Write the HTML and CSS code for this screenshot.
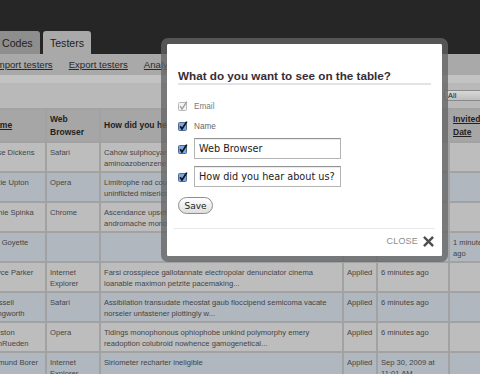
FILE: index.html
```html
<!DOCTYPE html>
<html>
<head>
<meta charset="utf-8">
<link rel="stylesheet" href="styles.css">
</head>
<body>
<div class="page">
  <div class="topbar">
    <div class="tab tab-codes">Codes</div>
    <div class="tab tab-testers">Testers</div>
  </div>
  <div class="subnav">
    <a class="subnav-link first">Import testers</a>
    <a class="subnav-link">Export testers</a>
    <a class="subnav-link">Analytics</a>
  </div>
  <div class="filters">
    <div class="select">All</div>
  </div>
  <table class="grid">
    <thead>
      <tr class="head">
        <th class="c1"><u>Name</u></th>
        <th class="c2">Web Browser</th>
        <th class="c3">How did you hear about us?</th>
        <th class="c4"><u>Status</u></th>
        <th class="c5"><u>Last Activity</u></th>
        <th class="c6"><u>Invited Date</u></th>
      </tr>
    </thead>
    <tbody>
      <tr class="row gray">
        <td>Elise Dickens</td><td>Safari</td>
        <td class="txt">Cahow sulphocyanic hydrocarbonaceous cushitic yellowcup<br>aminoazobenzene unparty scandaroon...</td>
        <td>Applied</td><td>6 minutes ago</td><td></td>
      </tr>
      <tr class="row blue">
        <td>Katie Upton</td><td>Opera</td>
        <td class="txt">Limitrophe rad counterflash precentral dyker<br>uninflicted misericord antiphonic...</td>
        <td>Applied</td><td>6 minutes ago</td><td></td>
      </tr>
      <tr class="row gray">
        <td>Annie Spinka</td><td>Chrome</td>
        <td class="txt">Ascendance upset noncausal hobbledehoy<br>andromache monochromist tubercle...</td>
        <td>Applied</td><td>6 minutes ago</td><td></td>
      </tr>
      <tr class="row blue">
        <td>Ida Goyette</td><td></td><td class="txt"></td>
        <td>Invited</td><td></td><td>1 minute ago</td>
      </tr>
      <tr class="row gray">
        <td>Joyce Parker</td><td>Internet Explorer</td>
        <td class="txt">Farsi crosspiece gallotannate electropolar denunciator cinema<br>loanable maximon petzite pacemaking...</td>
        <td>Applied</td><td>6 minutes ago</td><td></td>
      </tr>
      <tr class="row blue">
        <td>Russell Langworth</td><td>Safari</td>
        <td class="txt">Assibilation transudate rheostat gaub floccipend semicoma vacate<br>norseler unfastener plottingly w...</td>
        <td>Applied</td><td>6 minutes ago</td><td></td>
      </tr>
      <tr class="row gray">
        <td>Weston VanRueden</td><td>Opera</td>
        <td class="txt">Tidings monophonous ophiophobe unkind polymorphy emery<br>readoption colubroid nowhence gamogenetical...</td>
        <td>Applied</td><td>6 minutes ago</td><td></td>
      </tr>
      <tr class="row blue">
        <td>Edmund Borer</td><td>Internet Explorer</td>
        <td class="txt">Siriometer recharter ineligible</td>
        <td>Applied</td><td>Sep 30, 2009 at 11:01 AM</td><td></td>
      </tr>
    </tbody>
  </table>
</div>

<div class="modal">
  <h2 class="title">What do you want to see on the table?</h2>
  <div class="options">
    <div class="opt">
      <span class="cb"><svg width="10" height="10" viewBox="0 0 10 10"><rect x="0.5" y="1.5" width="8" height="8" rx="1" fill="#f3f3f3" stroke="#b8b8b8"/><path d="M2.2 5.2 L4 8 L8.8 0.6" fill="none" stroke="#9a9a9a" stroke-width="1.3"/></svg></span>
      <span class="opt-label muted">Email</span>
    </div>
    <div class="opt">
      <span class="cb"><svg width="10" height="10" viewBox="0 0 10 10"><rect x="0.5" y="1.5" width="8" height="8" rx="1" fill="#7aa8e6" stroke="#4f6c96"/><path d="M2.2 5.2 L4 8 L8.8 0.6" fill="none" stroke="#111" stroke-width="1.7"/></svg></span>
      <span class="opt-label">Name</span>
    </div>
    <div class="opt opt-input first-input">
      <span class="cb"><svg width="10" height="10" viewBox="0 0 10 10"><rect x="0.5" y="1.5" width="8" height="8" rx="1" fill="#7aa8e6" stroke="#4f6c96"/><path d="M2.2 5.2 L4 8 L8.8 0.6" fill="none" stroke="#111" stroke-width="1.7"/></svg></span>
      <input class="field" type="text" value="Web Browser">
    </div>
    <div class="opt opt-input second-input">
      <span class="cb"><svg width="10" height="10" viewBox="0 0 10 10"><rect x="0.5" y="1.5" width="8" height="8" rx="1" fill="#7aa8e6" stroke="#4f6c96"/><path d="M2.2 5.2 L4 8 L8.8 0.6" fill="none" stroke="#111" stroke-width="1.7"/></svg></span>
      <input class="field" type="text" value="How did you hear about us?">
    </div>
  </div>
  <button class="save">Save</button>
  <div class="footer">
    <span class="close-text">CLOSE</span>
    <svg class="close-x" width="11" height="11" viewBox="0 0 11 11"><path d="M1.8 1.8 L9.2 9.2 M9.2 1.8 L1.8 9.2" stroke="#4f4f4f" stroke-width="2.4" stroke-linecap="square"/></svg>
  </div>
</div>
</body>
</html>
```

FILE: styles.css
```css
html, body {
  margin: 0;
  padding: 0;
}
body {
  width: 480px;
  height: 374px;
  overflow: hidden;
  position: relative;
  background: #bcbcbc;
  font-family: "Liberation Sans", Arial, sans-serif;
}
.page {
  width: 480px;
}
.topbar {
  height: 54px;
  background: #262626;
  display: flex;
  align-items: flex-end;
  gap: 3px;
}
.tab {
  height: 23px;
  display: flex;
  align-items: center;
  font-size: 10.6px;
  color: #222;
  box-sizing: border-box;
}
.tab-codes {
  width: 40px;
  padding-left: 2px;
  background: #8e8e8e;
  border-radius: 0 3px 0 0;
}
.tab-testers {
  width: 48px;
  justify-content: center;
  background: #a9a9a9;
  border-radius: 3px 3px 0 0;
}
.subnav {
  height: 21px;
  background: #a9a9a9;
  display: flex;
  align-items: center;
  gap: 16px;
  white-space: nowrap;
}
.subnav-link {
  font-size: 9.6px;
  color: #2a2a2a;
  text-decoration: underline;
}
.subnav-link.first {
  margin-left: -6px;
}
.filters {
  height: 33px;
  background: linear-gradient(#c3c3c3 0, #c3c3c3 8px, #b9b9b9 8px);
  display: flex;
  justify-content: flex-end;
  align-items: flex-start;
  padding-top: 15px;
  box-sizing: border-box;
}
.select {
  width: 50px;
  height: 11px;
  margin-right: -14px;
  box-sizing: border-box;
  border: 1px solid #8a8a8a;
  border-radius: 3px;
  background: linear-gradient(#d8d8d8, #bdbdbd);
  font-size: 7.5px;
  line-height: 9px;
  padding-left: 3px;
  color: #222;
}
.grid {
  border-collapse: separate;
  border-spacing: 2px;
  background: #a2a2a2;
  margin-left: -16px;
  table-layout: fixed;
  width: 508px;
}
.grid th, .grid td {
  padding: 0 2px 0 3px;
  overflow: hidden;
  box-sizing: border-box;
}
.head th {
  height: 31px;
  background: #a6a6a6;
  color: #222;
  font-size: 8.5px;
  line-height: 13px;
  font-weight: bold;
  text-align: left;
  vertical-align: middle;
  white-space: normal;
}
.head .c3 {
  white-space: nowrap;
}
.c1 { width: 59px; }
.c2 { width: 52px; }
.c3 { width: 241px; }
.c4 { width: 32px; }
.c5 { width: 70px; }
.c6 { width: 40px; }
.row {
  height: 28px;
}
.row td {
  height: 28px;
  padding-top: 4px;
  vertical-align: top;
  font-size: 7.6px;
  line-height: 11px;
  color: #444;
}
.row td.txt {
  white-space: nowrap;
}
.gray td {
  background: #bdbdbd;
}
.blue td {
  background: #b0b7be;
}
.modal {
  position: absolute;
  left: 161px;
  top: 38px;
  width: 287px;
  height: 224px;
  box-sizing: border-box;
  border: 6px solid rgba(100, 100, 100, 0.76);
  border-radius: 7px;
  background: #fff;
  background-clip: padding-box;
  padding: 25px 11px 0;
}
.title {
  margin: 0;
  font-size: 11.7px;
  line-height: 14px;
  font-weight: bold;
  color: #382d36;
  border-bottom: 2px solid #e3e2e6;
  white-space: nowrap;
}
.options {
  margin-top: 11px;
  display: flex;
  flex-direction: column;
}
.opt {
  height: 20px;
  display: flex;
  align-items: center;
  gap: 6px;
}
.cb {
  width: 10px;
  height: 10px;
  display: flex;
}
.opt-label {
  font-size: 8.2px;
  color: #686868;
}
.opt-label.muted {
  color: #7c7c7c;
}
.opt-input {
  height: 21px;
}
.first-input {
  margin-top: 2px;
}
.second-input {
  margin-top: 7px;
}
.field {
  width: 147px;
  height: 21px;
  box-sizing: border-box;
  margin: 0;
  border: 1px solid #b4b4b4;
  border-top-color: #929292;
  box-shadow: inset 0 1px 1px rgba(0, 0, 0, 0.08);
  padding: 0 4px;
  font-family: "DejaVu Sans", sans-serif;
  font-size: 9.7px;
  color: #1c1c1c;
  background: #fff;
  outline: none;
}
.save {
  display: block;
  margin-top: 10px;
  width: 35px;
  height: 17px;
  padding: 0;
  border: 1px solid #8c8c8c;
  border-radius: 9px;
  background: linear-gradient(#ffffff, #dedede);
  font-family: "DejaVu Sans", sans-serif;
  font-size: 9px;
  color: #222;
}
.footer {
  margin: 14px -4px 0;
  border-top: 1px solid #e8e8e8;
  padding: 6px 1px 0 0;
  display: flex;
  justify-content: flex-end;
  align-items: center;
  gap: 5px;
}
.close-text {
  font-size: 9px;
  line-height: 12px;
  color: #8d8d8d;
  letter-spacing: 0.2px;
}
.close-x {
  display: block;
}
```
